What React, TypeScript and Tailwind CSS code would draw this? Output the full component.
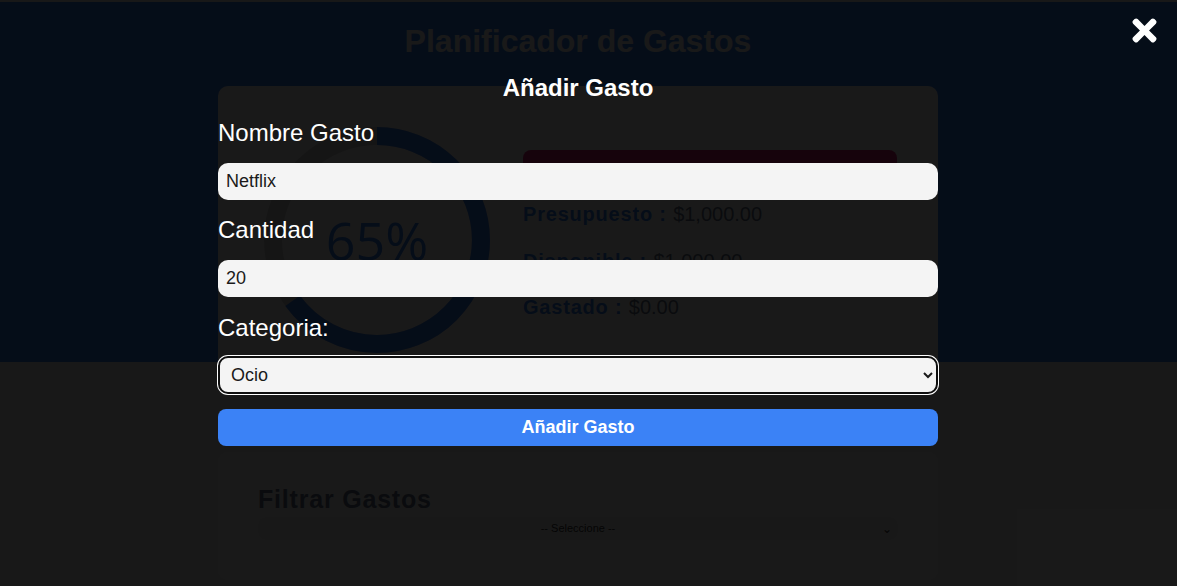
import React from "react";
import { FaTimes } from "react-icons/fa";

function Ring() {
  const r = 46;
  const c = 2 * Math.PI * r;
  const pct = 0.65;
  return (
    <svg width="226" height="226" viewBox="0 0 100 100" className="block">
      <circle cx="50" cy="50" r={r} fill="none" stroke="#d6d6d6" strokeWidth="8" />
      <circle
        cx="50"
        cy="50"
        r={r}
        fill="none"
        stroke="#3b82f6"
        strokeWidth="8"
        strokeDasharray={`${c} ${c}`}
        strokeDashoffset={c * (1 - pct)}
        transform="rotate(-90 50 50)"
      />
    </svg>
  );
}

export default function App() {
  return (
    <div className="relative w-full h-[586px] overflow-hidden bg-[#f5f5f5] font-['Liberation_Sans',Arial,sans-serif]">
      {/* underlying page */}
      <div className="h-[2px]" />
      <header className="bg-[#3b82f6] h-[360px]">
        <div className="mr-[21px]">
          <h1 className="pt-[21px] text-center text-[32px] leading-[37px] font-bold text-white">
            Planificador de Gastos
          </h1>
          <div className="mx-auto mt-[26px] w-[720px] h-[310px] rounded-[10px] bg-white flex items-start pt-[41px] pl-[46px]">
            <div className="relative w-[226px] h-[226px]">
              <Ring />
              <div className="absolute inset-0 flex items-center justify-center font-['Open_Sans',sans-serif] text-[52px] text-[#3b82f6]">
                65%
              </div>
            </div>
            <div className="ml-[33px] w-[374px]">
              <button className="mt-[23px] block w-full h-[38px] rounded-[8px] bg-[#db2777] text-white font-bold uppercase text-[15px]">
                Resetear App
              </button>
              <p className="mt-[15px] text-[20px] leading-[23px] text-[#64748b]">
                <span className="font-black tracking-[0.8px] text-[#3b82f6]">Presupuesto : </span>$1,000.00
              </p>
              <p className="mt-[24px] text-[20px] leading-[23px] text-[#64748b]">
                <span className="font-black tracking-[0.8px] text-[#3b82f6]">Disponible : </span>$1,000.00
              </p>
              <p className="mt-[23px] text-[20px] leading-[23px] text-[#64748b]">
                <span className="font-black tracking-[0.8px] text-[#3b82f6]">Gastado : </span>$0.00
              </p>
            </div>
          </div>
        </div>
      </header>
      <div className="mr-[21px]">
        <section className="mx-auto mt-[90px] w-[720px] h-[128px] rounded-[10px] bg-white px-[40px] pt-[33px]">
          <div className="text-[25px] leading-[28px] font-black tracking-[0.8px] text-[#64748b]">Filtrar Gastos</div>
          <div className="mt-[4px] h-[23px] rounded-[8px] bg-[#f5f5f5] flex items-center justify-center relative text-[11px] text-[#333]">
            -- Seleccione --
            <span className="absolute right-[6px] top-[3px] text-[12px]">⌄</span>
          </div>
        </section>
      </div>

      {/* modal overlay */}
      <div className="absolute inset-0 bg-black/90">
        <button className="absolute right-[15px] top-[13px] text-white" aria-label="cerrar">
          <FaTimes size={35} />
        </button>
        <form className="w-[720px] ml-[218px] pt-[74px] text-white">
          <h2 className="text-center text-[24px] leading-[28px] font-bold">Añadir Gasto</h2>
          <label className="block mt-[17px] text-[24px] leading-[28px]">Nombre Gasto</label>
          <input
            type="text"
            defaultValue="Netflix"
            className="block mt-[16px] w-full h-[37px] rounded-[10px] bg-[#f4f4f4] px-[8px] text-[18px] text-[#1a1a1a] outline-none"
          />
          <label className="block mt-[16px] text-[24px] leading-[28px]">Cantidad</label>
          <input
            type="text"
            defaultValue="20"
            className="block mt-[16px] w-full h-[37px] rounded-[10px] bg-[#f4f4f4] px-[8px] text-[18px] text-[#1a1a1a] outline-none"
          />
          <label className="block mt-[17px] text-[24px] leading-[28px]">Categoria:</label>
          <select
            defaultValue="ocio"
            className="block mt-[14px] w-full h-[38px] rounded-[10px] border-2 border-[#101010] shadow-[0_0_0_1px_#ffffff] bg-[#f4f4f4] px-[7px] text-[18px] text-[#1a1a1a] outline-none"
          >
            <option value="">-- Seleccione --</option>
            <option value="ahorro">Ahorro</option>
            <option value="comida">Comida</option>
            <option value="casa">Casa</option>
            <option value="gastos">Gastos Varios</option>
            <option value="ocio">Ocio</option>
            <option value="salud">Salud</option>
            <option value="suscripciones">Suscripciones</option>
          </select>
          <button
            type="button"
            className="block mt-[15px] w-full h-[37px] rounded-[8px] bg-[#3b82f6] text-white text-[18px] font-bold"
          >
            Añadir Gasto
          </button>
        </form>
      </div>
    </div>
  );
}
